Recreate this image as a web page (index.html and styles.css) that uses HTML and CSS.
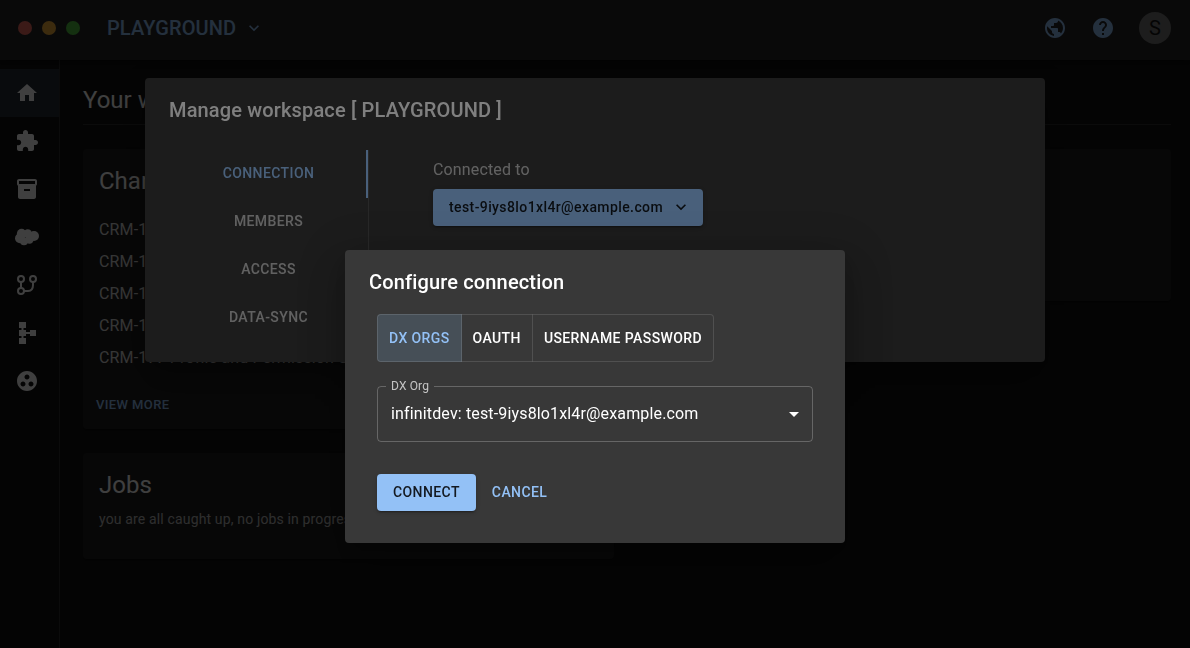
FILE: index.html
```
<!DOCTYPE html>
<html lang="en">
<head>
<meta charset="utf-8">
<title>Playground</title>
<link rel="stylesheet" href="styles.css">
</head>
<body>
<div class="app">
  <header class="topbar">
    <div class="lights"><i class="light red"></i><i class="light amber"></i><i class="light green"></i></div>
    <div class="workspace">PLAYGROUND
      <svg class="chevron" viewBox="0 0 24 24"><path d="M7.41 8.59 12 13.17l4.59-4.58L18 10l-6 6-6-6z"/></svg>
    </div>
    <div class="actions">
      <svg class="icon" viewBox="0 0 24 24"><path d="M12 2C6.48 2 2 6.48 2 12s4.48 10 10 10 10-4.48 10-10S17.52 2 12 2zm-1 17.93c-3.95-.49-7-3.85-7-7.93 0-.62.08-1.21.21-1.79L9 15v1c0 1.1.9 2 2 2v1.93zm6.9-2.54c-.26-.81-1-1.39-1.9-1.39h-1v-3c0-.55-.45-1-1-1H8v-2h2c.55 0 1-.45 1-1V7h2c1.1 0 2-.9 2-2v-.41c2.93 1.19 5 4.06 5 7.41 0 2.08-.8 3.97-2.1 5.39z"/></svg>
      <svg class="icon" viewBox="0 0 24 24"><path d="M12 2C6.48 2 2 6.48 2 12s4.48 10 10 10 10-4.48 10-10S17.52 2 12 2zm1 17h-2v-2h2v2zm2.07-7.75-.9.92C13.45 12.9 13 13.5 13 15h-2v-.5c0-1.1.45-2.1 1.17-2.83l1.24-1.26c.37-.36.59-.86.59-1.41 0-1.1-.9-2-2-2s-2 .9-2 2H8c0-2.21 1.79-4 4-4s4 1.79 4 4c0 .88-.36 1.68-.93 2.25z"/></svg>
      <div class="avatar">S</div>
    </div>
  </header>
  <div class="body">
    <nav class="rail">
      <a class="rail-item active"><svg class="icon" viewBox="0 0 24 24"><path d="M10 20v-6h4v6h5v-8h3L12 3 2 12h3v8z"/></svg></a>
      <a class="rail-item"><svg class="icon" viewBox="0 0 24 24"><path d="M20.5 11H19V7c0-1.1-.9-2-2-2h-4V3.5C13 2.12 11.88 1 10.5 1S8 2.12 8 3.5V5H4c-1.1 0-1.99.9-1.99 2v3.8H3.5c1.49 0 2.7 1.21 2.7 2.7s-1.21 2.7-2.7 2.7H2V20c0 1.1.9 2 2 2h3.8v-1.5c0-1.49 1.21-2.7 2.7-2.7s2.7 1.21 2.7 2.7V22H17c1.1 0 2-.9 2-2v-4h1.5c1.38 0 2.5-1.12 2.5-2.5S21.88 11 20.5 11z"/></svg></a>
      <a class="rail-item"><svg class="icon" viewBox="0 0 24 24"><path d="M20 2H4c-1 0-2 .9-2 2v3.01c0 .72.43 1.34 1 1.69V20c0 1.1 1.1 2 2 2h14c.9 0 2-.9 2-2V8.7c.57-.35 1-.97 1-1.69V4c0-1.1-1-2-2-2zm-5 12H9v-2h6v2zm5-7H4V4h16v3z"/></svg></a>
      <a class="rail-item"><svg class="icon cloud" viewBox="0 0 24 24"><circle cx="6.6" cy="8.5" r="4.7"/><circle cx="5" cy="13.2" r="5"/><circle cx="12.7" cy="8.5" r="4.3"/><circle cx="19" cy="11" r="5"/><circle cx="9" cy="16.2" r="4"/><circle cx="14.5" cy="14.5" r="4.2"/></svg></a>
      <a class="rail-item"><svg class="icon stroke" viewBox="0 0 24 24"><circle cx="6" cy="6" r="3"/><circle cx="18" cy="6" r="3"/><circle cx="6" cy="18" r="3"/><path d="M6 9v6M18 9v3c0 4-2 6-5 6H9"/></svg></a>
      <a class="rail-item"><svg class="icon" viewBox="0 0 24 24"><path d="M4 1h7v6H8.500v2H11v2h4V9h6v6h-6v-2h-4v2H8.500v2H11v6H4v-6h2.500v-2H4V9h2.500V7H4z"/></svg></a>
      <a class="rail-item"><svg class="icon" viewBox="0 0 24 24"><path d="M12 2C6.48 2 2 6.48 2 12s4.48 10 10 10 10-4.48 10-10S17.52 2 12 2zM8 17.5c-1.38 0-2.5-1.12-2.5-2.5s1.12-2.5 2.5-2.5 2.5 1.12 2.5 2.5-1.12 2.5-2.5 2.5zM9.5 8c0-1.38 1.12-2.5 2.5-2.5s2.5 1.12 2.5 2.5-1.12 2.5-2.5 2.5S9.5 9.38 9.5 8zm6.5 9.5c-1.38 0-2.5-1.12-2.5-2.5s1.12-2.5 2.5-2.5 2.5 1.12 2.5 2.5-1.12 2.5-2.5 2.5z"/></svg></a>
    </nav>
    <main class="main">
      <h1 class="page-title">Your work</h1>
      <div class="grid">
        <div class="column">
          <section class="card changes">
            <h2 class="card-title">Changes</h2>
            <ul class="list">
              <li>CRM-181</li>
              <li>CRM-180</li>
              <li>CRM-179</li>
              <li>CRM-178</li>
              <li>CRM-177 Profile and Permission Set</li>
            </ul>
            <a class="more">VIEW MORE</a>
          </section>
          <section class="card jobs">
            <h2 class="card-title">Jobs</h2>
            <p class="note">you are all caught up, no jobs in progress</p>
          </section>
        </div>
        <section class="card side"></section>
      </div>
    </main>
  </div>
</div>

<div class="modal">
  <div class="dialog manage">
    <h2 class="dialog-title">Manage workspace [ PLAYGROUND ]</h2>
    <div class="manage-body">
      <div class="tabs">
        <div class="tab selected">CONNECTION</div>
        <div class="tab">MEMBERS</div>
        <div class="tab">ACCESS</div>
        <div class="tab">DATA-SYNC</div>
      </div>
      <div class="panel">
        <div class="panel-label">Connected to</div>
        <button class="button filled account">test-9iys8lo1xl4r@example.com
          <svg class="chevron" viewBox="0 0 24 24"><path d="M7.41 8.59 12 13.17l4.59-4.58L18 10l-6 6-6-6z"/></svg>
        </button>
      </div>
    </div>
  </div>
</div>

<div class="modal">
  <div class="dialog configure">
    <h2 class="dialog-title">Configure connection</h2>
    <div class="configure-body">
      <div class="toggles">
        <button class="toggle on">DX ORGS</button><button class="toggle">OAUTH</button><button class="toggle">USERNAME PASSWORD</button>
      </div>
      <fieldset class="select">
        <legend class="select-label">DX Org</legend>
        <span class="select-value">infinitdev: test-9iys8lo1xl4r@example.com</span>
        <svg class="icon caret" viewBox="0 0 24 24"><path d="m7 10 5 5 5-5z"/></svg>
      </fieldset>
      <div class="buttons">
        <button class="button filled">CONNECT</button>
        <button class="button text">CANCEL</button>
      </div>
    </div>
  </div>
</div>
</body>
</html>
```
FILE: styles.css
```
:root {
  --primary: #93c1f6;
  --secondary-text: rgba(255, 255, 255, 0.7);
  --divider: rgba(255, 255, 255, 0.12);
}

* { box-sizing: border-box; }

body {
  margin: 0;
  height: 648px;
  overflow: hidden;
  background: #121212;
  color: #fff;
  font-family: Roboto, "Liberation Sans", sans-serif;
  font-size: 16px;
  line-height: 24px;
  letter-spacing: 0.15px;
  -webkit-font-smoothing: antialiased;
}

h1, h2, p, ul { margin: 0; padding: 0; }
ul { list-style: none; }
button { font: inherit; letter-spacing: inherit; color: inherit; margin: 0; }

.icon { width: 24px; height: 24px; fill: currentColor; display: block; }
.chevron { width: 20px; height: 20px; fill: currentColor; display: block; }

.app { height: 648px; display: flex; flex-direction: column; }

.topbar {
  height: 60px;
  flex: none;
  display: flex;
  align-items: center;
  padding: 0 19px 4px 18px;
  background: #272727;
  color: var(--primary);
  box-shadow: 0 2px 4px -1px rgba(0, 0, 0, 0.2), 0 4px 5px rgba(0, 0, 0, 0.14), 0 1px 10px rgba(0, 0, 0, 0.12);
  z-index: 1;
}
.lights { display: flex; gap: 10px; }
.light { width: 14px; height: 14px; border-radius: 50%; }
.red { background: #ec6a5e; }
.amber { background: #f1ae3b; }
.green { background: #53c242; }
.workspace {
  display: flex;
  align-items: center;
  gap: 8px;
  margin-left: 27px;
  font-size: 20px;
  font-weight: 500;
  letter-spacing: 0.1px;
}
.actions { margin-left: auto; display: flex; align-items: center; gap: 24px; }
.avatar {
  width: 32px;
  height: 32px;
  border-radius: 50%;
  background: #757575;
  color: #121212;
  font-size: 20px;
  line-height: 32px;
  text-align: center;
}

.body { flex: 1; display: flex; }
.rail { width: 60px; padding-top: 9px; border-right: 1px solid var(--divider); }
.rail-item { height: 48px; display: flex; align-items: center; padding-left: 15px; }
.rail-item.active { background: rgba(144, 202, 249, 0.16); }
.stroke { fill: none; stroke: currentColor; stroke-width: 2; }
.cloud { overflow: visible; }

.main { flex: 1; padding: 20px 19px 0 23px; }
.page-title {
  height: 45px;
  border-bottom: 1px solid var(--divider);
  font-size: 24px;
  font-weight: 400;
  line-height: 40px;
  letter-spacing: 0;
}
.grid { display: grid; grid-template-columns: 531px 1fr; gap: 24px; margin-top: 24px; align-items: start; }
.column { display: grid; gap: 24px; }
.card {
  padding: 16px;
  background: #1e1e1e;
  border-radius: 4px;
  box-shadow: 0 2px 1px -1px rgba(0, 0, 0, 0.2), 0 1px 1px rgba(0, 0, 0, 0.14), 0 1px 3px rgba(0, 0, 0, 0.12);
}
.changes { height: 280px; }
.jobs { height: 106px; }
.side { height: 152px; }
.card-title { font-size: 24px; font-weight: 400; line-height: 32px; letter-spacing: 0; }
.list { margin-top: 17px; }
.list li { height: 32px; line-height: 32px; color: rgba(255, 255, 255, 0.85); }
.more {
  display: block;
  margin: 20px 0 0 -3px;
  color: var(--primary);
  font-size: 13px;
  font-weight: 500;
  line-height: 22px;
  letter-spacing: 0.4px;
}
.note { margin-top: 8px; color: var(--secondary-text); font-size: 14px; line-height: 20px; letter-spacing: 0.15px; }

.modal {
  position: fixed;
  inset: 0;
  z-index: 2;
  background: rgba(0, 0, 0, 0.5);
}
.dialog {
  background: #383838;
  border-radius: 4px;
  box-shadow: 0 11px 15px -7px rgba(0, 0, 0, 0.2), 0 24px 38px 3px rgba(0, 0, 0, 0.14), 0 9px 46px 8px rgba(0, 0, 0, 0.12);
}
.dialog-title { padding: 16px 24px; font-size: 20px; font-weight: 500; line-height: 32px; letter-spacing: 0.15px; }
.manage { width: 900px; height: 284px; margin: 78px auto 0; }
.manage-body { display: flex; padding: 8px 24px 0; }
.tabs { width: 200px; border-right: 1px solid var(--divider); }
.tab {
  height: 48px;
  color: var(--secondary-text);
  font-size: 14px;
  font-weight: 500;
  line-height: 47px;
  letter-spacing: 0.4px;
  text-align: center;
}
.tab.selected { color: var(--primary); border-right: 2px solid var(--primary); padding-left: 2px; }
.panel { padding: 8px 0 0 64px; }
.panel-label { color: var(--secondary-text); }

.button {
  height: 37px;
  display: flex;
  align-items: center;
  border: 0;
  border-radius: 4px;
  padding: 0 16px 1px;
  font-size: 14px;
  font-weight: 500;
  letter-spacing: 0.4px;
}
.filled {
  background: var(--primary);
  color: rgba(0, 0, 0, 0.87);
  box-shadow: 0 3px 1px -2px rgba(0, 0, 0, 0.2), 0 2px 2px rgba(0, 0, 0, 0.14), 0 1px 5px rgba(0, 0, 0, 0.12);
}
.text { background: none; color: var(--primary); padding: 0 8px 1px; }
.account { width: 270px; margin-top: 7px; padding-right: 12px; justify-content: space-between; }

.configure { width: 500px; height: 293px; margin: 250px auto 0; }
.configure-body { padding: 0 32px; }
.toggles { display: flex; }
.toggle {
  height: 48px;
  padding: 0 11px;
  border: 1px solid var(--divider);
  background: none;
  font-size: 14px;
  font-weight: 500;
  letter-spacing: 0.4px;
}
.toggle + .toggle { margin-left: -1px; border-left-color: transparent; }
.toggle:first-child { border-radius: 4px 0 0 4px; }
.toggle:last-child { border-radius: 0 4px 4px 0; }
.toggle.on { background: rgba(144, 202, 249, 0.16); color: var(--primary); }
.select {
  height: 62px;
  margin: 18px 0 0;
  padding: 0 6px 5px 8px;
  display: flex;
  align-items: center;
  border: 1px solid rgba(255, 255, 255, 0.23);
  border-radius: 4px;
}
.select-label { padding: 0 5px; color: var(--secondary-text); font-size: 12px; line-height: 12px; }
.select-value { flex: 1; padding-left: 5px; }
.buttons { display: flex; gap: 8px; margin-top: 32px; }
```
